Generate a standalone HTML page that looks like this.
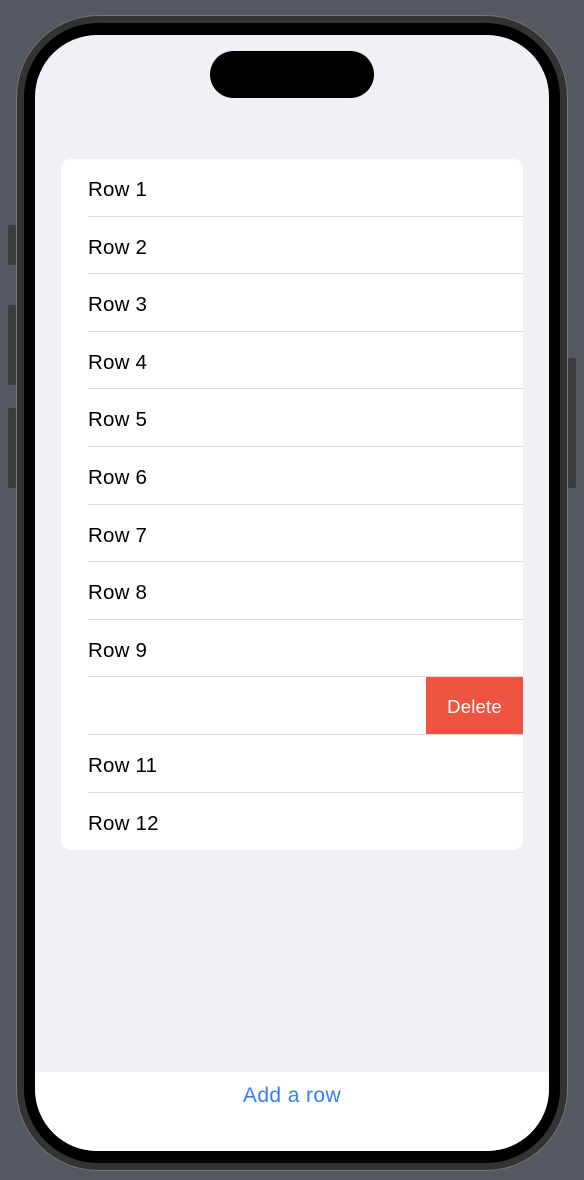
<!DOCTYPE html>
<html><head><style>
body{margin:0;width:584px;height:1180px;background:#545860;position:relative;overflow:hidden;font-family:"Liberation Sans",sans-serif}
.btn{position:absolute;background:#3c3d40;border-radius:2px}
.frame{position:absolute;left:16px;top:15px;width:552px;height:1156px;border-radius:82px;background:#333;box-shadow:inset 0 0 0 1px #777}
.black{position:absolute;left:24px;top:23px;width:536px;height:1140px;border-radius:74px;background:#000}
.screen{position:absolute;left:35px;top:35px;width:514px;height:1116px;border-radius:62px;background:#f1f0f6;overflow:hidden}
.island{position:absolute;left:175px;top:16px;width:164px;height:47px;border-radius:24px;background:#000}
.card{position:absolute;left:26px;top:124px;width:462px;height:691px;background:#fff;border-radius:10px;overflow:hidden}
.row{position:relative;height:57.6px;font-size:20.5px;color:#000;line-height:61px;padding-left:27px;letter-spacing:0.2px}
.row:after{content:"";position:absolute;left:27px;right:0;bottom:0;height:1px;background:#dedede}
.row:last-child:after{display:none}
.del{position:absolute;right:0;top:0;width:97px;height:57px;background:#ee5441;color:#fff;font-size:18.5px;text-align:center;line-height:59px;padding:0}
.bottom{position:absolute;left:0;top:1037px;width:514px;height:79px;background:#fff}
.add{position:absolute;left:0;width:514px;top:12px;text-align:center;color:#3580f6;font-size:21px;letter-spacing:0.4px}
</style></head><body>
<div class="btn" style="left:8px;top:225px;width:8px;height:40px"></div>
<div class="btn" style="left:8px;top:305px;width:8px;height:80px"></div>
<div class="btn" style="left:8px;top:408px;width:8px;height:80px"></div>
<div class="btn" style="left:568px;top:358px;width:8px;height:130px"></div>
<div class="frame"></div>
<div class="black"></div>
<div class="screen">
<div class="island"></div>
<div class="card">
<div class="row">Row 1</div><div class="row">Row 2</div><div class="row">Row 3</div><div class="row">Row 4</div><div class="row">Row 5</div><div class="row">Row 6</div><div class="row">Row 7</div><div class="row">Row 8</div><div class="row">Row 9</div>
<div class="row"><div class="del">Delete</div></div>
<div class="row">Row 11</div><div class="row">Row 12</div>
</div>
<div class="bottom"><div class="add">Add a row</div></div>
</div>
</body></html>
